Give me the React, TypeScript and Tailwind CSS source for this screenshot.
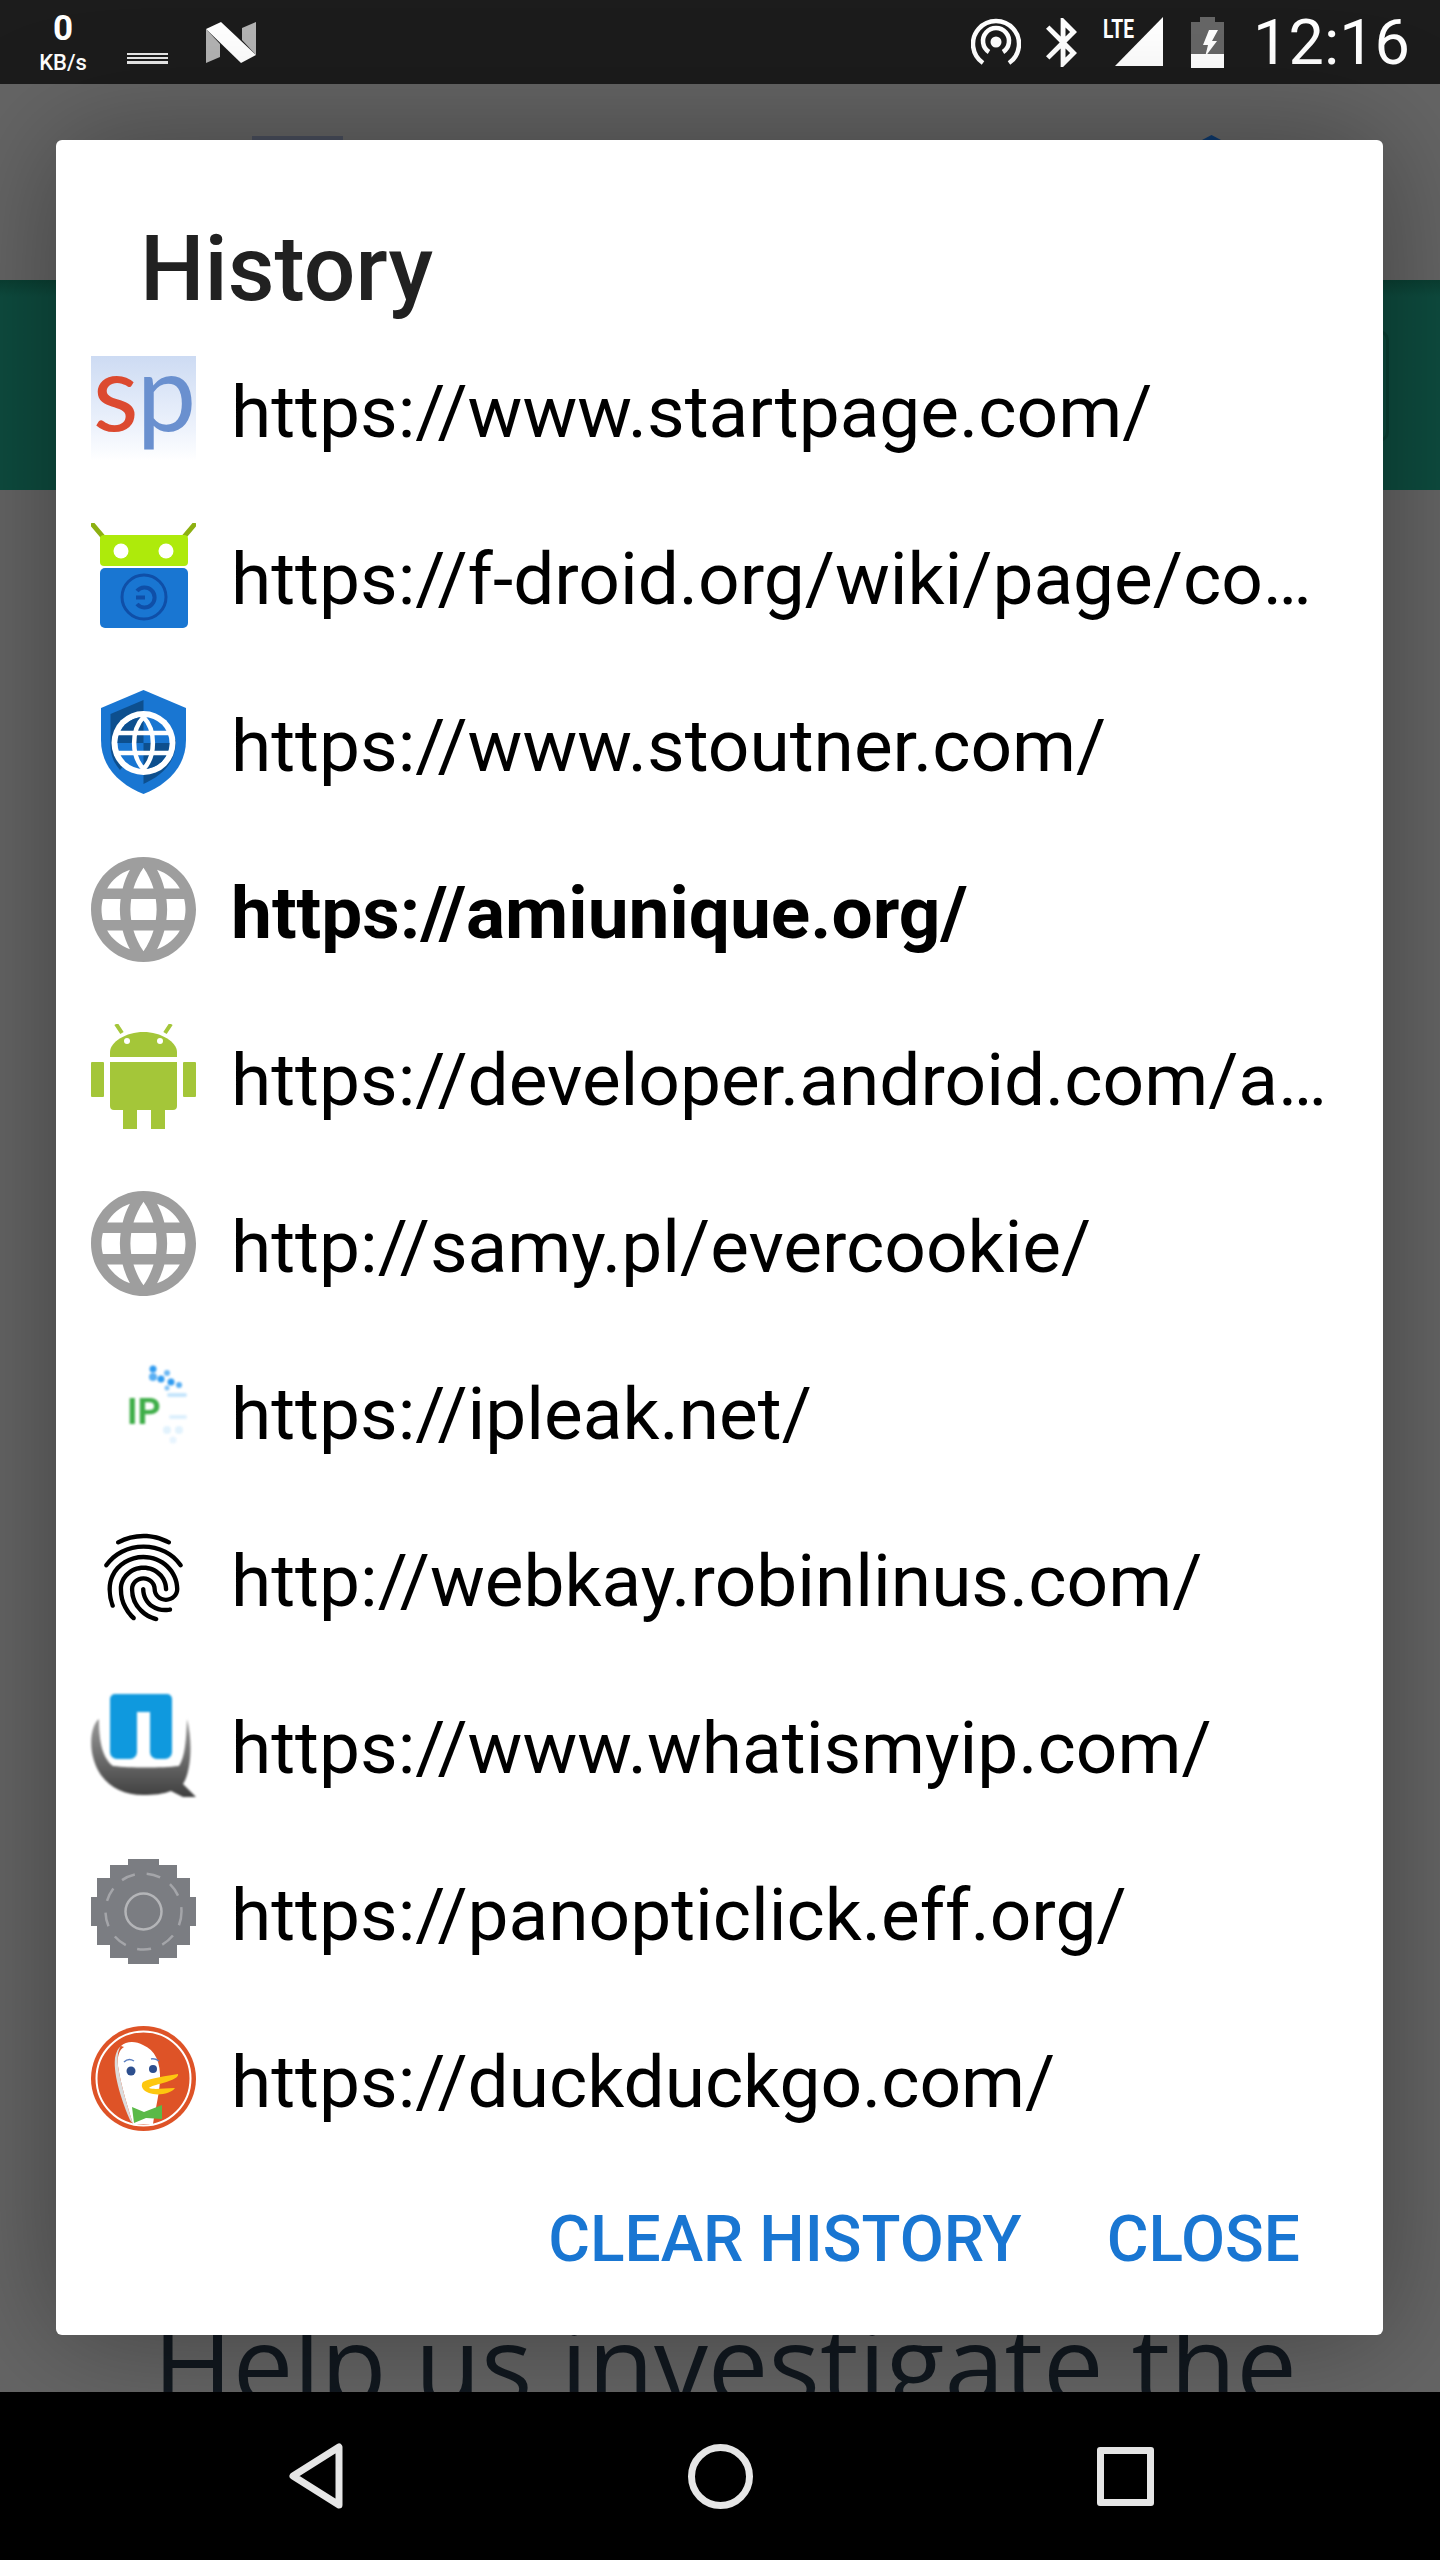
import React from "react";
import { MdFingerprint } from "react-icons/md";

const GLOBE =
  "M11.99 2C6.47 2 2 6.48 2 12s4.47 10 9.99 10C17.52 22 22 17.52 22 12S17.52 2 11.99 2zm6.93 6h-2.95c-.32-1.25-.78-2.45-1.38-3.56 1.84.63 3.37 1.91 4.33 3.56zM12 4.04c.83 1.2 1.48 2.53 1.91 3.96h-3.82c.43-1.43 1.08-2.76 1.91-3.96zM4.26 14C4.1 13.36 4 12.69 4 12s.1-1.36.26-2h3.38c-.08.66-.14 1.32-.14 2 0 .68.06 1.34.14 2H4.26zm.82 2h2.95c.32 1.25.78 2.45 1.38 3.56-1.84-.63-3.37-1.9-4.33-3.56zm2.95-8H5.08c.96-1.66 2.49-2.93 4.33-3.56C8.81 5.55 8.35 6.75 8.03 8zM12 19.96c-.83-1.2-1.48-2.53-1.91-3.96h3.82c-.43 1.43-1.08 2.76-1.91 3.96zM14.34 14H9.66c-.09-.66-.16-1.32-.16-2 0-.68.07-1.35.16-2h4.68c.09.65.16 1.32.16 2 0 .68-.07 1.34-.16 2zm.25 5.56c.6-1.11 1.06-2.31 1.38-3.56h2.95c-.96 1.65-2.49 2.93-4.33 3.56zM16.36 14c.08-.66.14-1.32.14-2 0-.68-.06-1.34-.14-2h3.38c.16.64.26 1.31.26 2s-.1 1.36-.26 2h-3.38z";

const GlobeIcon = () => (
  <svg viewBox="2 2 20 20" className="w-[105px] h-[105px]">
    <path d={GLOBE} fill="#9e9e9e" />
  </svg>
);

const StartpageIcon = () => (
  <div className="w-[105px] h-[105px] bg-gradient-to-b from-[#cddbf3] via-[#eef3fc] via-[70%] to-white flex items-center justify-center text-[106px] leading-[105px] font-normal font-['Lato',sans-serif] tracking-[-2px] pb-[36px] blur-[0.4px]">
    <span className="text-[#dc4a30]">s</span>
    <span className="text-[#6a90cf]">p</span>
  </div>
);

const FdroidIcon = () => (
  <svg viewBox="0 0 105 105" className="w-[105px] h-[105px]">
    <path d="M2 2 L13 15 M103 2 L92 15" stroke="#8db011" strokeWidth="5" strokeLinecap="round" />
    <rect x="9" y="12" width="88" height="31" rx="4" fill="#aeea0b" />
    <circle cx="30" cy="28" r="7.5" fill="#fff" />
    <circle cx="75" cy="28" r="7.5" fill="#fff" />
    <rect x="9" y="45" width="88" height="60" rx="5" fill="#1976d2" />
    <circle cx="53" cy="74" r="22" fill="none" stroke="#0f4fa8" strokeWidth="3" />
    <path d="M46 68 A10 10 0 1 1 46 81 M45 74.5 H54" fill="none" stroke="#0f4fa8" strokeWidth="4" />
  </svg>
);

const ShieldIcon = () => (
  <svg viewBox="0 0 105 105" className="w-[105px] h-[105px]">
    <path d="M52.5 0 L95 18 V50 C95 78 75 95 52.5 104 C30 95 10 78 10 50 V18 Z" fill="#1976d2" />
    <path d="M52.5 10 L19.5 24 V55 C19.5 66 23 73 29 80 L52.5 52 Z" fill="#0d4f8e" />
    <path d="M85 50 C85 72 72 85 52.5 94 V52 Z" fill="#0d4f8e" />
    <circle cx="52.5" cy="53" r="32" fill="#fff" />
    <circle cx="52.5" cy="53" r="26" fill="#1976d2" />
    <path d="M52.5 27 A26 26 0 0 0 26.5 53 H52.5 Z" fill="#0d4f8e" />
    <path d="M52.5 53 H78.5 A26 26 0 0 1 52.5 79 Z" fill="#0d4f8e" />
    <path d="M52.5 27 C40 40 40 66 52.5 79 C65 66 65 40 52.5 27 Z" fill="none" stroke="#fff" strokeWidth="4.5" />
    <path d="M26 43 H79 M26 63 H79" stroke="#fff" strokeWidth="4.5" />
  </svg>
);

const AndroidIcon = () => (
  <svg viewBox="0 0 105 105" className="w-[105px] h-[105px] blur-[0.4px]">
    <path d="M19 33 V28 C19 18 35 8 52.5 8 C70 8 86 18 86 28 V33 Z" fill="#a4c639" />
    <path d="M31 9 L25 0 M74 9 L80 0" stroke="#a4c639" strokeWidth="4" />
    <circle cx="36" cy="17" r="3" fill="#fff" />
    <circle cx="69" cy="17" r="3" fill="#fff" />
    <path d="M19 38 H86 V82 A4 4 0 0 1 82 86 H74 V105 H60 V86 H46 V105 H32 V86 H23 A4 4 0 0 1 19 82 Z" fill="#a4c639" />
    <rect x="0" y="38" width="13" height="35" rx="1" fill="#a4c639" />
    <rect x="92" y="38" width="13" height="35" rx="1" fill="#a4c639" />
  </svg>
);

const IpleakIcon = () => (
  <svg viewBox="0 0 105 105" className="w-[105px] h-[105px] blur-[0.8px]">
    <text x="36" y="66" fontFamily="Roboto, sans-serif" fontWeight="700" fontSize="36" fill="#3fae49">IP</text>
    <g fill="#2f9bf0">
      <circle cx="62" cy="11" r="3.5" />
      <circle cx="62" cy="19" r="4" opacity="0.8" />
      <circle cx="70" cy="21" r="3.5" />
      <circle cx="76" cy="15" r="3" opacity="0.7" />
      <circle cx="80" cy="24" r="3.5" />
      <circle cx="88" cy="27" r="3" opacity="0.8" />
      <circle cx="76" cy="30" r="2.5" opacity="0.6" />
    </g>
    <g fill="#9fd4fa">
      <rect x="76" y="35" width="20" height="4" rx="2" opacity="0.6" />
      <rect x="78" y="57" width="18" height="4" rx="2" opacity="0.35" />
      <circle cx="76" cy="72" r="4" opacity="0.3" />
      <circle cx="88" cy="72" r="4" opacity="0.3" />
      <circle cx="82" cy="82" r="3.5" opacity="0.25" />
    </g>
  </svg>
);

const WhatIsMyIpIcon = () => (
  <svg viewBox="0 0 105 105" className="w-[105px] h-[105px] blur-[0.8px]">
    <defs>
      <linearGradient id="bowl" x1="0" y1="0" x2="0" y2="1">
        <stop offset="0" stopColor="#9a9a9a" />
        <stop offset="1" stopColor="#3f3f3f" />
      </linearGradient>
    </defs>
    <path d="M24 2 H76 A5 5 0 0 1 81 7 V60 A7 7 0 0 1 74 67 H66 A7 7 0 0 1 59 60 V20 H46 V60 A7 7 0 0 1 39 67 H26 A7 7 0 0 1 19 60 V7 A5 5 0 0 1 24 2 Z" fill="#0f99de" />
    <path d="M8 27 C1 32 -2 50 2 65 C8 90 28 103 52 103 C64 103 72 102 80 99 L92 105 H105 L92 92 C100 80 102 50 96 27 C95 50 94 65 88 74 C70 76 40 76 22 74 C10 65 8 45 8 27 Z" fill="url(#bowl)" />
  </svg>
);

const PanopticlickIcon = () => (
  <svg viewBox="0 0 105 105" className="w-[105px] h-[105px]">
    <path
      d="M37 0 H68 V6 H86 V19 H99 V38 H105 V67 H99 V86 H86 V99 H68 V105 H37 V99 H19 V86 H6 V67 H0 V38 H6 V19 H19 V6 H37 Z"
      fill="#7b7d82"
    />
    <circle cx="52.5" cy="52.5" r="18" fill="none" stroke="#b4b5b8" strokeWidth="2.5" className="blur-[0.6px]" />
    <circle cx="52.5" cy="52.5" r="38" fill="none" stroke="#a4a5a9" strokeWidth="2.5" strokeDasharray="14 12" className="blur-[0.6px]" />
  </svg>
);

const DuckIcon = () => (
  <svg viewBox="0 0 105 105" className="w-[105px] h-[105px]">
    <circle cx="52.5" cy="52.5" r="52.5" fill="#de5327" />
    <circle cx="52.5" cy="52.5" r="47" fill="none" stroke="#fff" strokeWidth="2" />
    <path d="M30 20 C35 15 45 15 52 19 C64 24 70 36 69 55 C68 70 64 85 62 98 L42 98 C38 85 30 60 27 40 C26 30 28 24 33 21 Z" fill="#fff" />
    <path d="M30 20 C27 24 26 30 27 40 C30 60 38 85 42 98 L39 94 C32 78 22 50 24 32 C25 26 27 22 30 20 Z" fill="#dcdcdc" />
    <circle cx="40" cy="45" r="4.5" fill="#2d4f8e" />
    <circle cx="62" cy="43" r="4" fill="#2d4f8e" />
    <path d="M33 36 C36 33 40 33 43 35 M60 33 C63 32 65 33 68 35" stroke="#5b7fc0" strokeWidth="1.5" fill="none" />
    <path d="M52 56 C60 52 76 50 87 48 C88 51 82 54 72 57 C65 59 60 60 58 62 C64 64 72 62 84 62 C80 68 66 70 58 67 C52 65 49 60 52 56 Z" fill="#fdc70f" />
    <path d="M41 81 L53 86 L71 79 L71 93 L55 92 L43 97 Z" fill="#5ab947" />
  </svg>
);

const NougatIcon = () => (
  <svg viewBox="0 0 50 41" className="w-[50px] h-[41px]">
    <path d="M0 7 L14 22 V35 L0 41 Z" fill="#b3b3b3" />
    <path d="M50 0 V33 L36 18 V6 Z" fill="#b3b3b3" />
    <path d="M0 7 L15 0 L50 33 L35 41 Z" fill="#fff" />
  </svg>
);

const HotspotIcon = () => (
  <svg viewBox="0 0 50 50" className="w-[50px] h-[50px]">
    <g fill="none" stroke="#fff" strokeWidth="4.5">
      <path d="M12 46 A23 23 0 1 1 38 46" />
      <path d="M18 35 A13 13 0 1 1 32 35" />
    </g>
    <circle cx="25" cy="25" r="5.5" fill="#fff" />
  </svg>
);

const BluetoothIcon = () => (
  <svg viewBox="5 2 12.71 20" className="w-[31px] h-[49px]">
    <path
      d="M17.71 7.71L12 2h-1v7.59L6.41 5 5 6.41 10.59 12 5 17.59 6.41 19 11 14.41V22h1l5.71-5.71-4.3-4.29 4.3-4.29zM13 5.83l1.88 1.88L13 9.59V5.83zm1.88 10.46L13 18.17v-3.76l1.88 1.88z"
      fill="#fff"
    />
  </svg>
);

const SignalIcon = () => (
  <svg viewBox="0 0 60 50" className="w-[60px] h-[50px] overflow-visible">
    <text x="0" y="21" textLength="31" lengthAdjust="spacingAndGlyphs" fontFamily="Roboto, sans-serif" fontWeight="700" fontSize="26" fill="#fff">LTE</text>
    <path d="M12 49 L60 0 V49 Z" fill="#fff" />
  </svg>
);

const BatteryIcon = () => (
  <svg viewBox="0 0 33 51" className="w-[33px] h-[51px]">
    <path d="M9 0 H24 V5 H33 V37 H0 V5 H9 Z" fill="#666" />
    <rect x="0" y="37" width="33" height="14" fill="#fff" />
    <path d="M18 13 H27 L21 24 H26 L14 40 L17 28 H12 Z" fill="#fff" />
  </svg>
);

const historyItems: { url: string; icon: React.ReactNode; bold?: boolean }[] = [
  { url: "https://www.startpage.com/", icon: <StartpageIcon /> },
  { url: "https://f-droid.org/wiki/page/co…", icon: <FdroidIcon /> },
  { url: "https://www.stoutner.com/", icon: <ShieldIcon /> },
  { url: "https://amiunique.org/", icon: <GlobeIcon />, bold: true },
  { url: "https://developer.android.com/a…", icon: <AndroidIcon /> },
  { url: "http://samy.pl/evercookie/", icon: <GlobeIcon /> },
  { url: "https://ipleak.net/", icon: <IpleakIcon /> },
  { url: "http://webkay.robinlinus.com/", icon: <MdFingerprint size={105} color="#000" /> },
  { url: "https://www.whatismyip.com/", icon: <WhatIsMyIpIcon /> },
  { url: "https://panopticlick.eff.org/", icon: <PanopticlickIcon /> },
  { url: "https://duckduckgo.com/", icon: <DuckIcon /> },
];

export default function App() {
  return (
    <div className="relative w-[1440px] h-[2560px] flex flex-col overflow-hidden font-['Roboto',sans-serif]">
      {/* Status bar */}
      <div className="h-[84px] shrink-0 bg-[#1c1c1c] flex items-center text-white">
        <div className="w-[50px] ml-[38px] pt-[2px] flex flex-col items-center">
          <span className="text-[35px] leading-[32px] font-bold">0</span>
          <span className="mt-[8px] text-[22px] leading-[20px] font-medium">KB/s</span>
        </div>
        <div className="ml-[39px] mt-[32px] w-[41px] flex flex-col gap-[2px]">
          <div className="h-[2px] bg-[#e8e8e8]" />
          <div className="h-[2px] bg-[#e8e8e8]" />
          <div className="h-[3px] bg-[#e8e8e8]" />
        </div>
        <div className="ml-[38px]">
          <NougatIcon />
        </div>
        <div className="ml-auto flex items-center">
          <HotspotIcon />
          <div className="ml-[25px]">
            <BluetoothIcon />
          </div>
          <div className="ml-[26px]">
            <SignalIcon />
          </div>
          <div className="ml-[28px]">
            <BatteryIcon />
          </div>
          <span className="ml-[29px] mr-[30px] text-[63px] leading-none">12:16</span>
        </div>
      </div>

      {/* Dimmed page behind the dialog */}
      <div className="flex-1 bg-[#656565] flex flex-col overflow-hidden">
        <div className="h-[196px] shrink-0" />
        <div className="h-[210px] shrink-0 bg-gradient-to-b from-[#0a4033] via-[#0e4c3f] via-[8%] to-[#0e4c3f]" />
        <div className="pt-[1808px] pl-[153px] text-[108px] leading-[130px] whitespace-nowrap text-[#11181f] font-['Open_Sans',sans-serif]">
          Help us investigate the
        </div>
      </div>

      {/* Nav bar */}
      <div className="h-[168px] shrink-0 bg-black flex items-center justify-between pl-[289px] pr-[286px]">
        <svg viewBox="0 0 54 66" className="w-[54px] h-[66px]">
          <path d="M50 4 V62 L4 33 Z" fill="none" stroke="#e6e6e6" strokeWidth="7" strokeLinejoin="round" />
        </svg>
        <div className="w-[65px] h-[65px] rounded-full border-[7px] border-[#e6e6e6]" />
        <div className="w-[57px] h-[59px] rounded-[3px] border-[7px] border-[#e6e6e6]" />
      </div>

      {/* Bits of the page that peek out above the dialog */}
      <div className="absolute left-[252px] top-[136px] w-[91px] h-[4px] bg-[#4a4f5e]" />
      <div className="absolute left-[1202px] top-[135px] w-[19px] h-[5px] bg-[#0e3a6e] [clip-path:polygon(50%_0,100%_100%,0_100%)]" />
      <div className="absolute left-[1360px] top-[330px] w-[29px] h-[112px] rounded-[10px] border-[3px] border-[#0a4033]" />

      {/* History dialog */}
      <div className="absolute left-[56px] top-[140px] w-[1327px] h-[2195px] bg-white rounded-[6px] shadow-[0_0_120px_rgba(0,0,0,0.36)] flex flex-col">
        <div className="h-[185px] shrink-0 pl-[84px] pt-[79px] text-[91px] leading-[100px] font-medium text-[#212121]">
          History
        </div>
        <div className="flex flex-col">
          {historyItems.map((item) => (
            <div key={item.url} className="h-[167px] flex items-center pl-[35px]">
              <div className="w-[105px] h-[105px] shrink-0">{item.icon}</div>
              <span
                className={`ml-[35px] pt-[8px] text-[73px] leading-none whitespace-nowrap text-black ${
                  item.bold ? "font-bold" : "font-normal"
                }`}
              >
                {item.url}
              </span>
            </div>
          ))}
        </div>
        <div className="flex-1 flex justify-end pr-[83px] pt-[38px] gap-[85px] text-[64px] leading-[80px] font-medium text-[#1976d2]">
          <span>CLEAR HISTORY</span>
          <span>CLOSE</span>
        </div>
      </div>
    </div>
  );
}
